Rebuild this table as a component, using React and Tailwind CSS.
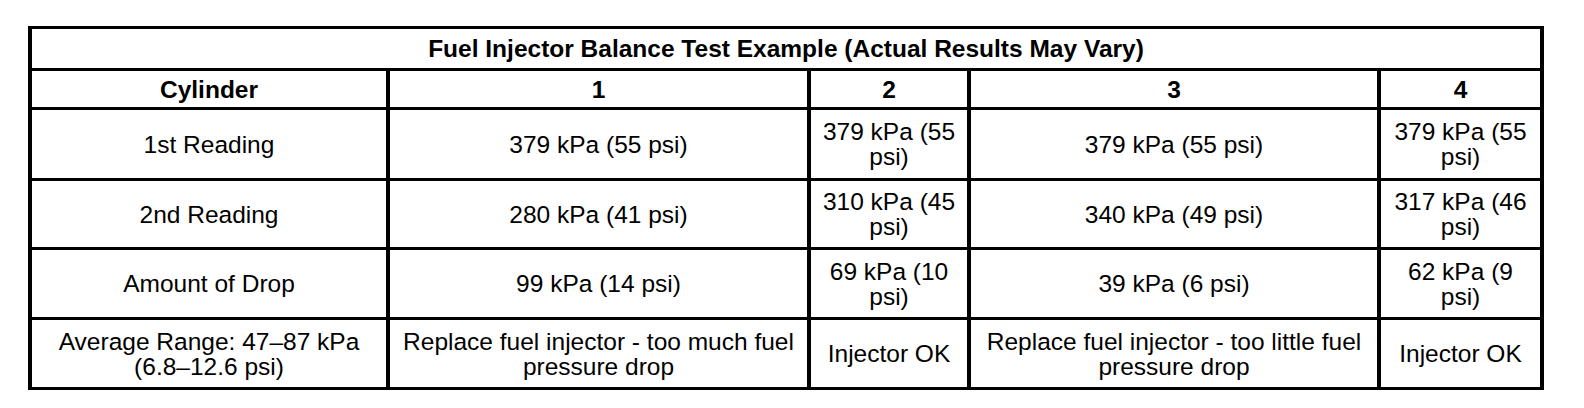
import React from "react";

const rows = [
  ["1st Reading", "379 kPa (55 psi)", "379 kPa (55 psi)", "379 kPa (55 psi)", "379 kPa (55 psi)"],
  ["2nd Reading", "280 kPa (41 psi)", "310 kPa (45 psi)", "340 kPa (49 psi)", "317 kPa (46 psi)"],
  ["Amount of Drop", "99 kPa (14 psi)", "69 kPa (10 psi)", "39 kPa (6 psi)", "62 kPa (9 psi)"],
  [
    "Average Range: 47–87 kPa (6.8–12.6 psi)",
    "Replace fuel injector - too much fuel pressure drop",
    "Injector OK",
    "Replace fuel injector - too little fuel pressure drop",
    "Injector OK",
  ],
];

function Cell({ children, bold }) {
  return (
    <div
      className={
        "bg-white flex items-center justify-center text-center px-[5px] " +
        (bold ? "font-bold" : "font-normal")
      }
    >
      <span>{children}</span>
    </div>
  );
}

export default function App() {
  return (
    <div
      className="bg-white w-[1584px] h-[408px] pt-[26px] pl-[28px] text-black text-[24.5px] leading-[25px]"
      style={{ fontFamily: '"Liberation Sans", Arial, sans-serif' }}
    >
      <div className="grid w-fit grid-cols-[354px_417px_156px_406px_159px] grid-rows-[39px_36px_68px_66px_67px_67px] gap-x-[4px] gap-y-[3px] bg-black border-x-4 border-y-[3px] border-black">
        <div className="col-span-5 bg-white flex items-center justify-center font-bold">
          Fuel Injector Balance Test Example (Actual Results May Vary)
        </div>
        <Cell bold>Cylinder</Cell>
        <Cell bold>1</Cell>
        <Cell bold>2</Cell>
        <Cell bold>3</Cell>
        <Cell bold>4</Cell>
        {rows.map((r, i) =>
          r.map((c, j) => <Cell key={i + "-" + j}>{c}</Cell>)
        )}
      </div>
    </div>
  );
}
